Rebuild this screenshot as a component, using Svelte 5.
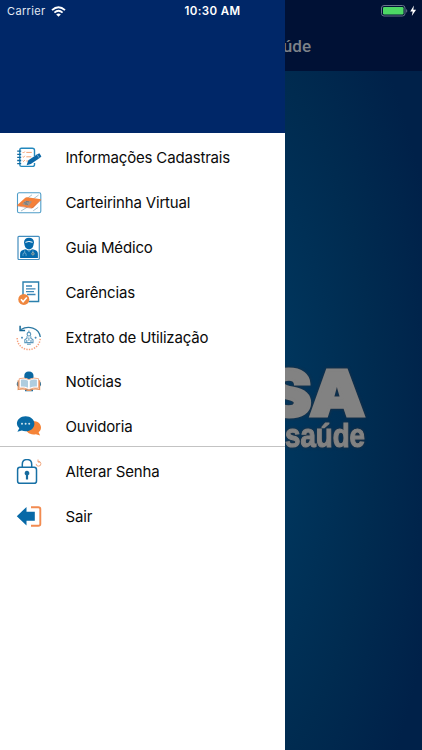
<script lang="ts">
  type Item = { icon: string; label: string };

  const mainItems: Item[] = [
    { icon: "cadastro", label: "Informações Cadastrais" },
    { icon: "carteirinha", label: "Carteirinha Virtual" },
    { icon: "medico", label: "Guia Médico" },
    { icon: "carencias", label: "Carências" },
    { icon: "extrato", label: "Extrato de Utilização" },
    { icon: "noticias", label: "Notícias" },
    { icon: "ouvidoria", label: "Ouvidoria" }
  ];

  const accountItems: Item[] = [
    { icon: "senha", label: "Alterar Senha" },
    { icon: "sair", label: "Sair" }
  ];
</script>

{#snippet menuIcon(name: string)}
  <svg class="menu-icon" viewBox="0 0 26 26" fill="none" aria-hidden="true">
    {#if name === "cadastro"}
      <path d="M16.5 21.4H5.5Q3.8 21.4 3.8 19.7V5.3Q3.8 3.3 5.5 3.3H16.2Q18.5 3.3 18.5 5.3V11M18.5 18v1.7q0 1.7-2 1.7" stroke="#2388bd" stroke-width="1.4" />
      <path d="M1.2 6.2h4M1.2 9.3h4M1.2 12.4h4M1.2 15.5h4M1.2 18.6h4" stroke="#12699f" stroke-width="1.3" />
      <path d="M6.7 7.2l.8.8 1.3-1.5M10.3 7.4h5.5M6.7 11.5l.8.8 1.3-1.5M10.3 11.8h5M6.7 15.7l.8.8 1.3-1.5M10.3 16h2" stroke="#f4a173" stroke-width="1" />
      <path d="M10.6 20.2l1.7-5 9-6 2.1-1 2 3.4-1.7 1.4-8.9 6z" fill="#0b67a6" />
      <path d="M21.1 9.6l2 3.2" stroke="#fff" stroke-width=".4" />
    {:else if name === "carteirinha"}
      <rect x="1.5" y="2.8" width="23.3" height="20" rx="1.6" stroke="#4f9dc8" stroke-width="1.1" />
      <path d="M9 10L16 4.8M17 9.2l5.6-4.2M5 21l7-4.3M17.2 20.8l5-3.5" stroke="#85a9ba" stroke-width=".7" />
      <path d="M.8 15.6L9.3 7.7Q10 7.1 11 7.2L25.2 9.2 17.5 17.5Q16.7 18.2 15.7 18z" fill="#f58038" />
      <path d="M6 14.3l3.4-3.5 6.6.6-3.2 4.3z" fill="#a2948b" />
      <path d="M8 12.7l3 .4M10 11.4l3 .5M9 14l3 .4" stroke="#68767b" stroke-width=".8" />
      <path d="M1.3 15.9l14.6 2.4L25 10" stroke="#be603c" stroke-width=".5" />
    {:else if name === "medico"}
      <rect x="2" y="1.3" width="21.3" height="23.2" rx=".9" stroke="#448ebf" stroke-width="1.2" />
      <path d="M8 7.5q.1-4.7 5-4.7t5 4.7l-.7 3.3q-.8 3.3-4.3 3.7-3.5-.4-4.3-3.7z" fill="#056aac" />
      <path d="M9.4 7.3q3.4-1.7 7.2 0" stroke="#fff" />
      <path d="M4.1 23v-4.3q0-3.4 5.2-4.4l3.7 1.1 3.7-1.1q5.2 1 5.2 4.4V23z" fill="#056aac" />
      <path d="M8.7 15.5v2.1M7 20.8v-1.4q0-1.6 1.5-1.6t1.6 1.6v1.4M16.9 15.5v2.4" stroke="#86b9d5" stroke-width=".8" />
      <circle cx="16.9" cy="18.8" r="1.2" stroke="#cab697" stroke-width=".8" />
      <path d="M10.8 14.6l2.2 2.2 2.2-2.2" stroke="#82b8d5" stroke-width=".6" />
    {:else if name === "carencias"}
      <path d="M7 15V2h15.6v19.5H12.5" stroke="#2b80ad" stroke-width="1.4" />
      <path d="M10 6h6M10 8.8h9.5M10 11.7h8M11 14.5h8.5" stroke="#3c87b6" stroke-width="1.3" />
      <circle cx="7.8" cy="19.4" r="5.5" fill="#ef873f" />
      <path d="M5 19.3l2.1 2.5 3.7-4.3" stroke="#fff" stroke-width="1.6" />
    {:else if name === "extrato"}
      <path d="M5 4.5C12 .2 23 2.4 24.3 12" stroke="#2c78a2" stroke-width="1.3" />
      <path d="M4.1.7v4.9h5" stroke="#166896" stroke-width="1.5" />
      <path d="M1.2 13a11.5 11.5 0 0 0 23 .2" stroke="#f7a27f" stroke-width="1.5" stroke-dasharray="1.4 1.2" />
      <circle cx="12.9" cy="9.2" r="1.8" stroke="#5e99bd" stroke-width="1.2" />
      <path d="M12.9 5.5v2M11 11.2v2l-2.2 1.6v2.8h8.2v-2.8l-2.2-1.6v-2M10.8 17.8v-2.7M15 17.8v-2.7M12.9 12.5v3.2M11 19.2h3.8" stroke="#5e99bd" stroke-width="1.1" />
      <path d="M5 12.7h2M6 11.7v2M18.6 12.7h2M19.6 11.7v2" stroke="#4186b5" stroke-width=".9" />
    {:else if name === "noticias"}
      <path d="M8.3 9V7q0-4.5 4.6-4.5t4.6 4.5v2l-4.6 1.5z" fill="#0b68a1" />
      <path d="M2.5 12Q.7 13 .7 15.2T3 18zm20.8 0q1.8 1 1.8 3.2T22.8 18zM9 20h8v2.2H9z" fill="#126ca4" />
      <path d="M3.2 9.7q5-1.7 9.7.8 4.8-2.5 9.7-.8v9.4q-5.2-.8-9.7 1.5-4.6-2.3-9.7-1.5z" fill="#fff" stroke="#f1ad88" stroke-width="1" />
      <path d="M4.9 10.7q4-.8 7.1 1v7q-3.4-1.7-7.1-1.2zm8.9 1q3.1-1.8 7.1-1v6.8q-3.7-.5-7.1 1.2z" fill="#afcddf" />
      <path d="M2.2 11.2v9.3q6-1.5 8.9.8h3.6q3-2.3 8.9-.8v-9.3" stroke="#e5925c" stroke-width="1.2" />
    {:else if name === "ouvidoria"}
      <path d="M17 7.1c4.6 0 8 2.8 8 6.5 0 2-.9 3.5-2.4 4.7l1.5 3.1-4.2-1.2c-5.9 1.3-10.4-2.2-10.4-6.6 0-3.8 3.2-6.5 7.5-6.5z" fill="#f58438" />
      <path d="M9.6 2.2c5 0 8.8 3.2 8.8 7.5s-3.8 7.6-8.8 7.6q-2 0-3.8-.7l-4.4 1.1 1.9-3.4Q.9 12.1.9 9.7c0-4.3 3.7-7.5 8.7-7.5z" fill="#086aa5" />
      <g fill="#cee4ed"><circle cx="6" cy="9.8" r="1" /><circle cx="9.6" cy="9.8" r="1" /><circle cx="13.2" cy="9.8" r="1" /></g>
    {:else if name === "senha"}
      <rect x="1.6" y="8.3" width="18.9" height="16" rx="2.4" stroke="#1770a5" stroke-width="1.5" />
      <path d="M6.3 8.2V5.2q0-4.6 4.7-4.6t4.7 4.6v3" stroke="#1770a5" stroke-width="1.5" />
      <path d="M8.6 14.2a2.4 2.4 0 1 1 3.5 2.1v4.1H9.9v-4.1a2.4 2.4 0 0 1-1.3-2.1z" fill="#176b9d" />
      <path d="M20.1 4.9a2.4 2.4 0 1 0 2-2.5M22 .5v2.6l2 .1" stroke="#ee9f74" stroke-width=".9" />
    {:else if name === "sair"}
      <path d="M.8 12.3L10.5 2.9v4.8h8.3v9h-8.3v4.8z" fill="#0769a7" />
      <path d="M15 3.2h7.3q2 0 2 1.8v15q0 1.8-2 1.8H15" stroke="#f28b50" stroke-width="1.9" />
    {/if}
  </svg>
{/snippet}

{#snippet menuList(items: Item[])}
  <ul class="menu-list">
    {#each items as item}
      <li class="menu-item">
        {@render menuIcon(item.icon)}
        <span class="menu-label">{item.label}</span>
      </li>
    {/each}
  </ul>
{/snippet}

<div class="screen">
  <main class="page">
    <header class="page-header"><h1>Saúde</h1></header>
    <section class="page-body">
      <svg class="brand" viewBox="0 0 157 110">
        <g class="brand-text">
          <text class="brand-top" x="0" y="55.5" textLength="100" lengthAdjust="spacingAndGlyphs">SA</text>
          <text class="brand-bottom" x="20" y="87" textLength="80" lengthAdjust="spacingAndGlyphs">saúde</text>
        </g>
      </svg>
    </section>
  </main>

  <aside class="drawer">
    <div class="drawer-header"></div>
    <nav>
      {@render menuList(mainItems)}
      <div class="divider"></div>
      {@render menuList(accountItems)}
    </nav>
  </aside>

  <div class="status-bar">
    <div class="carrier">
      <span>Carrier</span>
      <svg width="15" height="11" viewBox="0 0 15 11" fill="none">
        <path d="M1 4.1Q7.5-1.8 14 4.1" stroke="#fff" stroke-width="1.9" />
        <path d="M3.4 6.6Q7.5 3 11.6 6.6" stroke="#fff" stroke-width="1.8" />
        <path d="M5.2 8.4Q7.5 6.6 9.8 8.4L7.5 10.7z" fill="#fff" />
      </svg>
    </div>
    <span class="clock">10:30 AM</span>
    <div class="battery">
      <svg width="36" height="12" viewBox="0 0 36 12">
        <rect x=".5" y=".5" width="23.5" height="10.5" rx="2.5" fill="none" stroke="#67758b" />
        <rect x="2" y="2" width="20.5" height="7.5" rx="1.2" fill="#4dd865" />
        <path d="M25.2 4v3.7q1.1-.5 1.1-1.8t-1.1-1.9z" fill="#67758b" />
        <path d="M32.9.6L29.2 6.4h2.5l-.9 4.7 4.3-6.3h-2.8z" fill="#fff" />
      </svg>
    </div>
  </div>
</div>

<style>
  :global(body) {
    margin: 0;
  }

  .screen {
    position: relative;
    display: grid;
    width: 422px;
    height: 750px;
    overflow: hidden;
    font-family: Inter, "Liberation Sans", sans-serif;
  }

  .page,
  .drawer,
  .status-bar {
    grid-area: 1 / 1;
  }

  .page {
    display: flex;
    flex-direction: column;
    background: #00204a;
  }

  .page-header {
    box-sizing: border-box;
    height: 71px;
    padding: 22px 111px 0 0;
    background: #001135;
    text-align: right;
  }

  .page-header h1 {
    margin: 0;
    color: #7d8289;
    font-family: Roboto, sans-serif;
    font-size: 17px;
    font-weight: 500;
    line-height: 49px;
  }

  .page-body {
    flex: 1;
    display: flex;
    justify-content: flex-end;
    align-items: flex-start;
    padding-top: 289px;
    background: radial-gradient(ellipse 235px 540px at 211px 350px, #003962 0%, #00355c 35%, #002b50 70%, #002149 100%);
  }

  .brand {
    width: 157px;
    height: 110px;
  }

  .brand-text {
    fill: #828282;
    stroke: #828282;
    filter: drop-shadow(0 0 1.5px #272f3b);
  }

  .brand-top {
    font-family: Inter, sans-serif;
    font-size: 63px;
    font-weight: 900;
    stroke-width: 3;
  }

  .brand-bottom {
    font-family: "Liberation Sans", sans-serif;
    font-size: 34px;
    font-weight: 700;
    stroke-width: 1.2;
  }

  .drawer {
    z-index: 1;
    width: 285px;
    background: #fff;
  }

  .drawer-header {
    height: 133px;
    margin-bottom: 3px;
    background: #002768;
  }

  .menu-list {
    margin: 0;
    padding: 0;
    list-style: none;
  }

  .menu-item {
    display: flex;
    align-items: center;
    gap: 23.5px;
    height: 44.8px;
    padding-left: 16px;
  }

  .menu-icon {
    flex: none;
    width: 26px;
    height: 26px;
  }

  .menu-label {
    color: #0a0a0a;
    font-size: 15px;
    line-height: 20px;
    letter-spacing: -0.17px;
    white-space: nowrap;
  }

  .divider {
    height: 1px;
    margin: -3.2px 0 2.2px;
    background: #c3c3c3;
  }

  .status-bar {
    z-index: 2;
    display: grid;
    grid-template-columns: 1fr auto 1fr;
    align-items: center;
    box-sizing: border-box;
    height: 22px;
    padding: 0 5px 0 7px;
    color: #fff;
    font-size: 11px;
  }

  .carrier {
    display: flex;
    align-items: center;
    gap: 5px;
    color: #e3e9f3;
    letter-spacing: 0.35px;
  }

  .clock {
    padding-left: 1px;
    font-size: 11.5px;
    font-weight: 600;
    letter-spacing: 0.4px;
  }

  .battery {
    display: flex;
    justify-content: flex-end;
  }
</style>
